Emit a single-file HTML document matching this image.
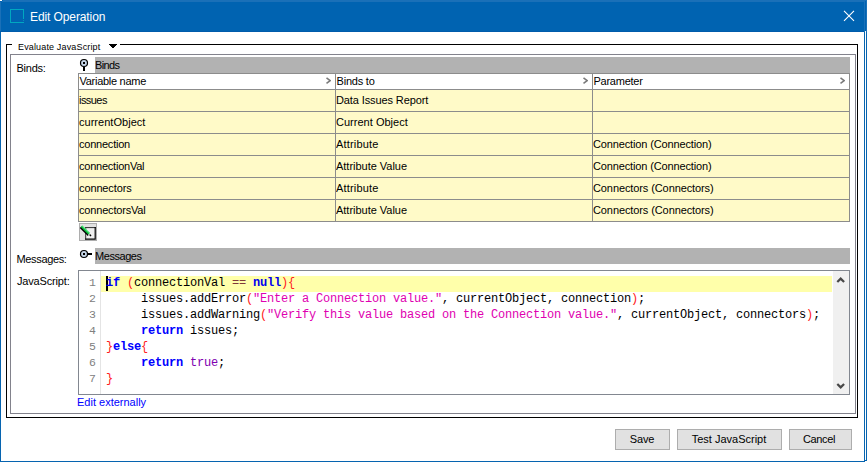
<!DOCTYPE html>
<html lang="en">
<head>
<meta charset="utf-8">
<title>Edit Operation</title>
<style>
*{box-sizing:border-box;margin:0;padding:0}
html,body{width:867px;height:462px;overflow:hidden;background:#fff}
body{position:relative;font-family:"Liberation Sans",sans-serif;font-size:11px;color:#000}
.abs{position:absolute}
.t{position:absolute;white-space:nowrap;line-height:14px;height:14px}
/* window chrome */
#title{left:0;top:0;width:867px;height:32px;background:#0063b1}
#title .hl{left:0;top:0;width:867px;height:2px;background:#1a70b8}
#title .vl{left:0;top:0;width:1px;height:32px;background:#1a70b8}
#title .dl{left:0;top:31px;width:864px;height:1px;background:#005cab}
#title .d1{left:0;top:1px;width:2px;height:1px;background:#0063b1}
#title .d2{left:2px;top:0;width:1px;height:1px;background:#0063b1}
#corner{left:0;top:0;width:2px;height:1px;background:#fff}
#bl{left:0;top:32px;width:1px;height:430px;background:#0664b0}
#br1{left:864px;top:32px;width:1px;height:430px;background:#0664b0}
#br1t{left:864px;top:0;width:1px;height:32px;background:#1a70b8}
#br2{left:865px;top:31px;width:1px;height:429px;background:#fff}
#br2t{left:865px;top:1px;width:1px;height:30px;background:#0063b1}
#br3{left:866px;top:32px;width:1px;height:429px;background:#0664b0}
#br3t{left:866px;top:0;width:1px;height:32px;background:#1a70b8}
#bb{left:0;top:461px;width:865px;height:1px;background:#0664b0}
#bb2{left:864px;top:460px;width:3px;height:1px;background:#0664b0}
#bb3{left:865px;top:461px;width:2px;height:1px;background:#fff}
#ttl{left:30px;top:9px;font-size:12px;line-height:16px;height:16px;color:#fff}
/* fieldset */
#fs{left:6px;top:44px;width:852px;height:374px;border:1px solid #000}
#legend{left:12px;top:38px;width:108px;height:14px;background:#fff}
#inner{left:10px;top:54px;width:846px;height:360px;border:1px solid #82828c}
.lbl{font-size:11px}
.bar{background:#b2b2b2}
/* table */
#tbl{left:78px;top:73px;width:772px;height:149px;background:#8c8c8c}
.cell{position:absolute;background:#fffac8;height:21px;line-height:21px;white-space:nowrap;padding-left:0px;overflow:hidden}
.hcell{position:absolute;background:#fff;height:15px;line-height:15px;white-space:nowrap;overflow:hidden;padding-left:0.5px}
.chev{position:absolute;top:3px;width:6px;height:8px}
/* code */
#code{left:78px;top:270px;width:772px;height:125px;border:1px solid #828790;background:#fff}
#gutter{left:1px;top:0px;width:21px;height:123px;background:#fff;border-right:1px solid #e4e4e4}
.ln{position:absolute;left:0;width:17px;text-align:right;color:#808080;font-family:"Liberation Mono",monospace;font-size:11.5px;line-height:16px;height:16px}
#hl{left:22px;top:5px;width:731px;height:16px;background:#ffffaa}
.cl{position:absolute;left:26.9px;height:16px;line-height:16px;white-space:pre;font-family:"Liberation Mono",monospace;font-size:12px;letter-spacing:-0.2px;color:#000}
.k{color:#0000ff;font-weight:bold}
.n{color:#0000f0;font-weight:bold}
.p{color:#ff2020}
.s{color:#e000b0}
.o{color:#803838}
.b{color:#8000b0}
#sb{left:754px;top:0px;width:16px;height:123px;background:#f0f0f0}
/* buttons */
.btn{position:absolute;top:429px;height:21px;border:1px solid #adadad;background:#e1e1e1;text-align:center;font-size:11px;line-height:19px;white-space:nowrap}
</style>
</head>
<body>
<!-- window chrome -->
<div id="title" class="abs"><div class="abs hl"></div><div class="abs vl"></div><div class="abs dl"></div><div class="abs d1"></div><div class="abs d2"></div></div>
<div id="corner" class="abs"></div>
<div id="bl" class="abs"></div>
<div id="br1" class="abs"></div><div id="br1t" class="abs"></div><div id="br2t" class="abs"></div><div id="br2" class="abs"></div><div id="br3" class="abs"></div><div id="br3t" class="abs"></div>
<div id="bb" class="abs"></div><div id="bb2" class="abs"></div><div id="bb3" class="abs"></div>
<svg class="abs" style="left:10px;top:9px" width="14" height="14" viewBox="0 0 14 14" shape-rendering="crispEdges"><path d="M0 0 H14 V10 H13 V1 H1 V13 H14 V14 H0 Z" fill="#00a8c0"/><rect x="13" y="11" width="1" height="1" fill="#0090bc"/></svg>
<div id="ttl" class="t" style="letter-spacing:-0.1px">Edit Operation</div>
<svg class="abs" style="left:843px;top:10px" width="12" height="12" viewBox="0 0 12 12"><path d="M1 0.8 L11 10.8 M11 0.8 L1 10.8" stroke="#fff" stroke-width="1.1" fill="none"/></svg>

<!-- fieldset -->
<div id="fs" class="abs"></div>
<div id="legend" class="abs"></div>
<div class="t" id="lg" style="left:18px;top:41px;font-size:9px;line-height:12px;height:12px;letter-spacing:0.15px">Evaluate JavaScript</div>
<svg class="abs" style="left:109px;top:44px" width="8" height="4" viewBox="0 0 8 4" shape-rendering="crispEdges"><path d="M0 0 H8 V1 H7 V2 H6 V3 H5 V4 H3 V3 H2 V2 H1 V1 H0 Z" fill="#000"/></svg>
<div id="inner" class="abs"></div>

<!-- labels -->
<div class="t lbl" id="l1" style="left:16.5px;top:61px;letter-spacing:-0.25px">Binds:</div>
<div class="t lbl" id="l2" style="left:16.5px;top:252px;letter-spacing:-0.35px">Messages:</div>
<div class="t lbl" id="l3" style="left:17px;top:274px;letter-spacing:-0.17px">JavaScript:</div>

<!-- Binds bar -->
<div class="abs bar" style="left:95px;top:57px;width:755px;height:16px"></div>
<svg class="abs" style="left:79px;top:58px" width="11" height="14" viewBox="0 0 11 14"><circle cx="5" cy="5" r="3.5" fill="#c6d6e8" stroke="#000" stroke-width="1.2"/><rect x="4" y="4" width="2" height="2" fill="#000"/><rect x="4" y="9" width="2" height="4" fill="#000"/></svg>
<div class="t" id="b1" style="left:95px;top:58px;letter-spacing:-0.6px">Binds</div>

<!-- table -->
<div id="tbl" class="abs">
 <div class="hcell" style="left:1px;top:1px;width:256px" id="h1"><span style="letter-spacing:-0.28px">Variable name</span><svg class="chev" style="left:246px" viewBox="0 0 6 8"><path d="M1.5 0.8 L5.2 3.6 L1.5 6.4" stroke="#7a7a7a" stroke-width="1.6" fill="none"/></svg></div>
 <div class="hcell" style="left:258px;top:1px;width:256px" id="h2"><span style="letter-spacing:-0.2px">Binds to</span><svg class="chev" style="left:246px" viewBox="0 0 6 8"><path d="M1.5 0.8 L5.2 3.6 L1.5 6.4" stroke="#7a7a7a" stroke-width="1.6" fill="none"/></svg></div>
 <div class="hcell" style="left:515px;top:1px;width:256px" id="h3"><span style="letter-spacing:-0.25px">Parameter</span><svg class="chev" style="left:246px" viewBox="0 0 6 8"><path d="M1.5 0.8 L5.2 3.6 L1.5 6.4" stroke="#7a7a7a" stroke-width="1.6" fill="none"/></svg></div>

 <div class="cell" style="left:1px;top:17px;width:256px;letter-spacing:-0.55px">issues</div>
 <div class="cell" style="left:258px;top:17px;width:256px;letter-spacing:-0.11px">Data Issues Report</div>
 <div class="cell" style="left:515px;top:17px;width:256px"></div>

 <div class="cell" style="left:1px;top:39px;width:256px;letter-spacing:0.03px">currentObject</div>
 <div class="cell" style="left:258px;top:39px;width:256px;letter-spacing:0.02px">Current Object</div>
 <div class="cell" style="left:515px;top:39px;width:256px"></div>

 <div class="cell" style="left:1px;top:61px;width:256px;letter-spacing:-0.22px">connection</div>
 <div class="cell" style="left:258px;top:61px;width:256px;letter-spacing:0.17px">Attribute</div>
 <div class="cell" style="left:515px;top:61px;width:256px;letter-spacing:-0.14px">Connection (Connection)</div>

 <div class="cell" style="left:1px;top:83px;width:256px;letter-spacing:-0.23px">connectionVal</div>
 <div class="cell" style="left:258px;top:83px;width:256px;letter-spacing:-0.02px">Attribute Value</div>
 <div class="cell" style="left:515px;top:83px;width:256px;letter-spacing:-0.14px">Connection (Connection)</div>

 <div class="cell" style="left:1px;top:105px;width:256px;letter-spacing:-0.12px">connectors</div>
 <div class="cell" style="left:258px;top:105px;width:256px;letter-spacing:0.17px">Attribute</div>
 <div class="cell" style="left:515px;top:105px;width:256px;letter-spacing:-0.10px">Connectors (Connectors)</div>

 <div class="cell" style="left:1px;top:127px;width:256px;letter-spacing:-0.18px">connectorsVal</div>
 <div class="cell" style="left:258px;top:127px;width:256px;letter-spacing:-0.02px">Attribute Value</div>
 <div class="cell" style="left:515px;top:127px;width:256px;letter-spacing:-0.10px">Connectors (Connectors)</div>
</div>

<!-- pencil button -->
<svg class="abs" style="left:79px;top:223px" width="18" height="18" viewBox="0 0 18 18">
<rect x="0.5" y="0.5" width="17" height="17" fill="#e1e1e1" stroke="#adadad"/>
<rect x="6.2" y="4.1" width="10.6" height="12.6" fill="#eeeeee"/>
<path d="M6.2 4.6 H16.8 M6.7 4.1 V16.7" stroke="#303030" stroke-width="1" fill="none"/>
<path d="M16.2 4.1 V16.7 M6.2 16.1 H16.8" stroke="#000" stroke-width="1.2" fill="none"/>
<path d="M1.5 4.2 L9.6 12.2" stroke="#000" stroke-width="2.2"/>
<path d="M2.5 3.2 L10.3 10.9" stroke="#10c040" stroke-width="2.2"/>
<path d="M3.1 2.7 L10.8 10.3" stroke="#8affb0" stroke-width="0.8"/>
<path d="M9.7 11.2 L10.9 12.3" stroke="#fff" stroke-width="2"/>
<path d="M10.6 11.6 L12 13" stroke="#000" stroke-width="1.4"/>
</svg>

<!-- Messages bar -->
<div class="abs bar" style="left:95px;top:248px;width:755px;height:16px"></div>
<svg class="abs" style="left:79px;top:249px" width="14" height="11" viewBox="0 0 14 11"><circle cx="5" cy="5" r="3.5" fill="#c6d6e8" stroke="#000" stroke-width="1.2"/><rect x="4" y="4" width="2" height="2" fill="#000"/><rect x="9" y="4" width="4" height="2" fill="#000"/></svg>
<div class="t" id="b2" style="left:95px;top:249px;letter-spacing:-0.45px">Messages</div>

<!-- code editor -->
<div id="code" class="abs">
 <div id="gutter" class="abs"></div>
 <div id="hl" class="abs"></div>
 <div class="ln" style="top:4px">1</div>
 <div class="ln" style="top:20px">2</div>
 <div class="ln" style="top:36px">3</div>
 <div class="ln" style="top:52px">4</div>
 <div class="ln" style="top:68px">5</div>
 <div class="ln" style="top:84px">6</div>
 <div class="ln" style="top:100px">7</div>
 <div class="abs" style="left:27px;top:5px;width:2px;height:15px;background:#000"></div>
 <div class="cl" style="top:4px"><span class="k">if</span> <span class="p">(</span>connectionVal <span class="o">==</span> <span class="n">null</span><span class="p">){</span></div>
 <div class="cl" style="top:20px;left:61.9px">issues.addError<span class="p">(</span><span class="s">"Enter a Connection value."</span>, currentObject, connection<span class="p">)</span>;</div>
 <div class="cl" style="top:36px;left:61.9px">issues.addWarning<span class="p">(</span><span class="s">"Verify this value based on the Connection value."</span>, currentObject, connectors<span class="p">)</span>;</div>
 <div class="cl" style="top:52px;left:61.9px"><span class="k">return</span> issues;</div>
 <div class="cl" style="top:68px"><span class="p">}</span><span class="k">else</span><span class="p">{</span></div>
 <div class="cl" style="top:84px;left:61.9px"><span class="k">return</span> <span class="b">true</span>;</div>
 <div class="cl" style="top:100px"><span class="p">}</span></div>
 <div id="sb" class="abs">
  <svg class="abs" style="left:3px;top:6px" width="10" height="7" viewBox="0 0 10 7"><path d="M1.3 5 L4.7 1.6 L8.1 5" stroke="#484848" stroke-width="2.2" fill="none"/></svg>
  <svg class="abs" style="left:3px;top:112px" width="10" height="7" viewBox="0 0 10 7"><path d="M1.3 1 L4.7 4.4 L8.1 1" stroke="#484848" stroke-width="2.2" fill="none"/></svg>
 </div>
</div>
<div class="t" id="ee" style="left:77px;top:395px;color:#0000ff">Edit externally</div>

<!-- buttons -->
<div class="btn" style="left:615px;width:55px;letter-spacing:-0.2px;padding-right:1px">Save</div>
<div class="btn" style="left:677px;width:105px;padding-right:1px">Test JavaScript</div>
<div class="btn" style="left:789px;width:63px;letter-spacing:-0.4px;padding-right:3px">Cancel</div>
</body>
</html>
